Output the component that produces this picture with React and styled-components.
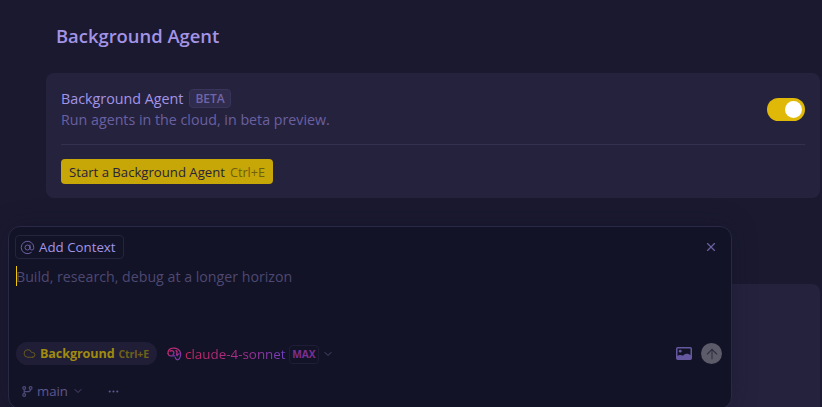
import React from "react";
import styled, { createGlobalStyle } from "styled-components";
import { AtSign, X, Cloud, ChevronDown, Ellipsis, ArrowUp } from "lucide-react";

const GlobalStyle = createGlobalStyle`
  html, body { margin: 0; padding: 0; background: #1a1930; }
  body { font-family: "Open Sans", "Noto Sans", sans-serif; overflow: hidden; }
`;

const Page = styled.div`
  position: relative;
  width: 822px;
  height: 407px;
  overflow: hidden;
  background: #1a1930;
`;

const Content = styled.div`
  padding: 23px 2px 0 46px;
  display: flex;
  flex-direction: column;
`;

const Title = styled.h1`
  margin: 0 0 25px 10px;
  font-size: 18.4px;
  line-height: 25px;
  font-weight: 600;
  color: #a394e6;
`;

const Card = styled.section`
  background: #25223e;
  border-radius: 8px;
  height: ${(props) => props.h}px;
  margin-top: ${(props) => props.mt || 0}px;
  padding: ${(props) => (props.empty ? 0 : "14px 15px")};
  box-sizing: border-box;
`;

const CardHead = styled.div`
  display: flex;
  align-items: center;
  justify-content: space-between;
  padding-bottom: 14px;
  border-bottom: 1px solid #34304f;
`;

const LabelRow = styled.div`
  display: flex;
  align-items: center;
  gap: 6px;
  height: 22px;
  font-size: 14.3px;
  color: #a394e6;
`;

const Badge = styled.span`
  height: 19px;
  padding: 0 5px;
  display: inline-flex;
  align-items: center;
  border-radius: 4px;
  background: #302c4e;
  border: 1px solid #38345a;
  box-sizing: border-box;
  font-size: 12px;
  font-weight: 600;
  color: #6f65a8;
`;

const Desc = styled.div`
  font-size: 14.25px;
  line-height: 21px;
  color: #6a60a0;
`;

const Toggle = styled.div`
  width: 38px;
  height: 23px;
  border-radius: 12px;
  background: #e0b808;
  position: relative;
  margin-top: 2px;
`;

const Knob = styled.span`
  position: absolute;
  top: 3px;
  right: 3px;
  width: 17px;
  height: 17px;
  border-radius: 50%;
  background: #fff;
`;

const StartButton = styled.button`
  margin-top: 14px;
  height: 25px;
  padding: 0 8px;
  display: inline-flex;
  align-items: center;
  gap: 5px;
  border: 0;
  border-radius: 4px;
  background: #c7a607;
  font-family: inherit;
  font-size: 13.15px;
  color: #26233c;
`;

const Shortcut = styled.span`
  font-size: ${(props) => props.size || 12.7}px;
  color: ${(props) => props.color || "#70600f"};
`;

const Composer = styled.div`
  position: absolute;
  left: 8px;
  top: 226px;
  width: 724px;
  height: 183px;
  box-sizing: border-box;
  padding: 8px 8px 0 7px;
  display: flex;
  flex-direction: column;
  background: #121326;
  border: 1px solid #2a2845;
  border-radius: 12px;
  box-shadow: 0 0 24px rgba(18, 19, 38, 0.35);
`;

const ComposerTop = styled.div`
  display: flex;
  align-items: center;
  justify-content: space-between;
  height: 24px;
`;

const ContextChip = styled.div`
  height: 24px;
  box-sizing: border-box;
  margin-left: -1px;
  padding: 0 7px 0 4px;
  display: flex;
  align-items: center;
  gap: 4px;
  border: 1px solid #25233d;
  border-radius: 4px;
  font-size: 13.3px;
  color: #a394e6;
  svg { color: #6a60a0; }
`;

const CloseWrap = styled.span`
  display: flex;
  color: #6a60a0;
  margin-right: 5px;
`;

const Prompt = styled.div`
  height: 66px;
  margin-top: 7px;
  font-size: 14.2px;
  line-height: 21px;
  color: #4e4872;
  position: relative;
`;

const Caret = styled.span`
  position: absolute;
  left: 0;
  top: 0;
  width: 1px;
  height: 20px;
  background: #f0c808;
`;

const ActionRow = styled.div`
  margin-top: 10px;
  display: flex;
  align-items: center;
  height: 23px;
`;

const ModePill = styled.div`
  height: 23px;
  padding: 0 8px 0 7px;
  display: flex;
  align-items: center;
  gap: 4px;
  border-radius: 12px;
  background: #1f1e36;
  font-size: 12.6px;
  font-weight: 700;
  letter-spacing: -0.1px;
  color: #a08a10;
  svg { color: #6f6118; }
`;

const ModelPicker = styled.div`
  margin-left: 10px;
  padding-top: 1px;
  display: flex;
  align-items: center;
  gap: 3px;
  font-size: 13.4px;
`;

const ModelName = styled.span`
  background: linear-gradient(90deg, #c7265f 0%, #a42f90 60%, #6f3fc0 100%);
  -webkit-background-clip: text;
  background-clip: text;
  color: transparent;
`;

const MaxTag = styled.span`
  height: 17px;
  padding: 0 2.5px;
  display: inline-flex;
  align-items: center;
  border: 1px solid #1f1e36;
  border-radius: 4px;
  font-size: 10.2px;
  font-weight: 700;
  color: #7b2f94;
`;

const Actions = styled.div`
  margin-left: auto;
  margin-right: 1px;
  display: flex;
  align-items: center;
  gap: 9px;
  color: #6558a0;
`;

const SendButton = styled.span`
  width: 21px;
  height: 21px;
  border-radius: 50%;
  background: #5c5b69;
  color: #2f2f42;
  display: flex;
  align-items: center;
  justify-content: center;
`;

const BranchRow = styled.div`
  margin-top: 16px;
  padding-left: 6px;
  display: flex;
  align-items: center;
  gap: 4px;
  height: 20px;
  font-size: 13.2px;
  color: #5f5790;
`;

const Dots = styled.span`
  display: flex;
  margin-left: 19px;
  color: #5f5790;
`;

const BrainIcon = () => (
  <svg width="15" height="14" viewBox="0 0 15 14" fill="none" strokeWidth="1.2" strokeLinecap="round" strokeLinejoin="round">
    <defs>
      <linearGradient id="brainGrad" x1="0" y1="0" x2="1" y2="1">
        <stop offset="0" stopColor="#d0286a" />
        <stop offset="0.55" stopColor="#a03090" />
        <stop offset="1" stopColor="#6a40c0" />
      </linearGradient>
    </defs>
    <g stroke="url(#brainGrad)">
      <path d="M1 6.5C0.6 3.6 2.8 1.2 6 1.2c3.6-.4 7 1.6 7.6 5 .4 2-.1 4-1.4 5.6-.8 1-2.2 1.4-3 .4l-.9-1.6" />
      <path d="M1 6.5c.3 1.6 1.7 2.6 3.4 2.4h3.4" />
      <path d="M3 4.2c1.2-.9 2.6-.7 3.4.3M6.4 4.5c.9 1 .7 2.3-.4 3" />
      <path d="M9 3.6c1 .5 1.3 1.6.8 2.6-.6 1-.4 2 .6 2.6M12.2 6.8c-.8 0-1.4.4-1.8 1" />
    </g>
  </svg>
);

const PictureIcon = () => (
  <svg width="16" height="13" viewBox="0 0 16 13" fill="none">
    <rect x="0.75" y="0.75" width="14.5" height="11.5" rx="1" stroke="currentColor" strokeWidth="1.5" />
    <circle cx="4.2" cy="4.2" r="1.4" fill="currentColor" />
    <path d="M1 12V9.2c1.6-1.4 3-1.6 4.4-.9 1 .5 1.6.3 2.6-.6 1.6-1.5 4.6-1.5 7 .6V12z" fill="currentColor" />
  </svg>
);

const BranchIcon = () => (
  <svg width="11" height="11" viewBox="0 0 11 11" fill="none" stroke="currentColor" strokeWidth="1.2" opacity="0.8">
    <circle cx="2.2" cy="2" r="1.4" />
    <circle cx="8.6" cy="2" r="1.4" />
    <circle cx="2.2" cy="9" r="1.4" />
    <path d="M2.2 3.4v4.2M8.6 3.4c0 1.6-1.6 2.2-3.2 2.2H2.2" />
  </svg>
);

export default function App() {
  return (
    <Page>
      <GlobalStyle />
      <Content>
        <Title>Background Agent</Title>
        <Card h={125}>
          <CardHead>
            <div>
              <LabelRow>
                Background Agent <Badge>BETA</Badge>
              </LabelRow>
              <Desc>Run agents in the cloud, in beta preview.</Desc>
            </div>
            <Toggle>
              <Knob />
            </Toggle>
          </CardHead>
          <StartButton>
            Start a Background Agent <Shortcut>Ctrl+E</Shortcut>
          </StartButton>
        </Card>
        <Card empty h={140} mt={86} />
      </Content>
      <Composer>
        <ComposerTop>
          <ContextChip>
            <AtSign size={15} strokeWidth={1.6} />
            Add Context
          </ContextChip>
          <CloseWrap>
            <X size={14} strokeWidth={2} />
          </CloseWrap>
        </ComposerTop>
        <Prompt>
          Build, research, debug at a longer horizon
          <Caret />
        </Prompt>
        <ActionRow>
          <ModePill>
            <Cloud size={13} strokeWidth={1.6} />
            Background
            <Shortcut size={10.5} color="#6f6118">Ctrl+E</Shortcut>
          </ModePill>
          <ModelPicker>
            <BrainIcon />
            <ModelName>claude-4-sonnet</ModelName>
            <MaxTag>MAX</MaxTag>
            <ChevronDown size={12} color="#4e4872" />
          </ModelPicker>
          <Actions>
            <PictureIcon />
            <SendButton>
              <ArrowUp size={16} strokeWidth={1.6} />
            </SendButton>
          </Actions>
        </ActionRow>
        <BranchRow>
          <BranchIcon />
          main
          <ChevronDown size={12} color="#4e4872" />
          <Dots>
            <Ellipsis size={13} strokeWidth={2} />
          </Dots>
        </BranchRow>
      </Composer>
    </Page>
  );
}
